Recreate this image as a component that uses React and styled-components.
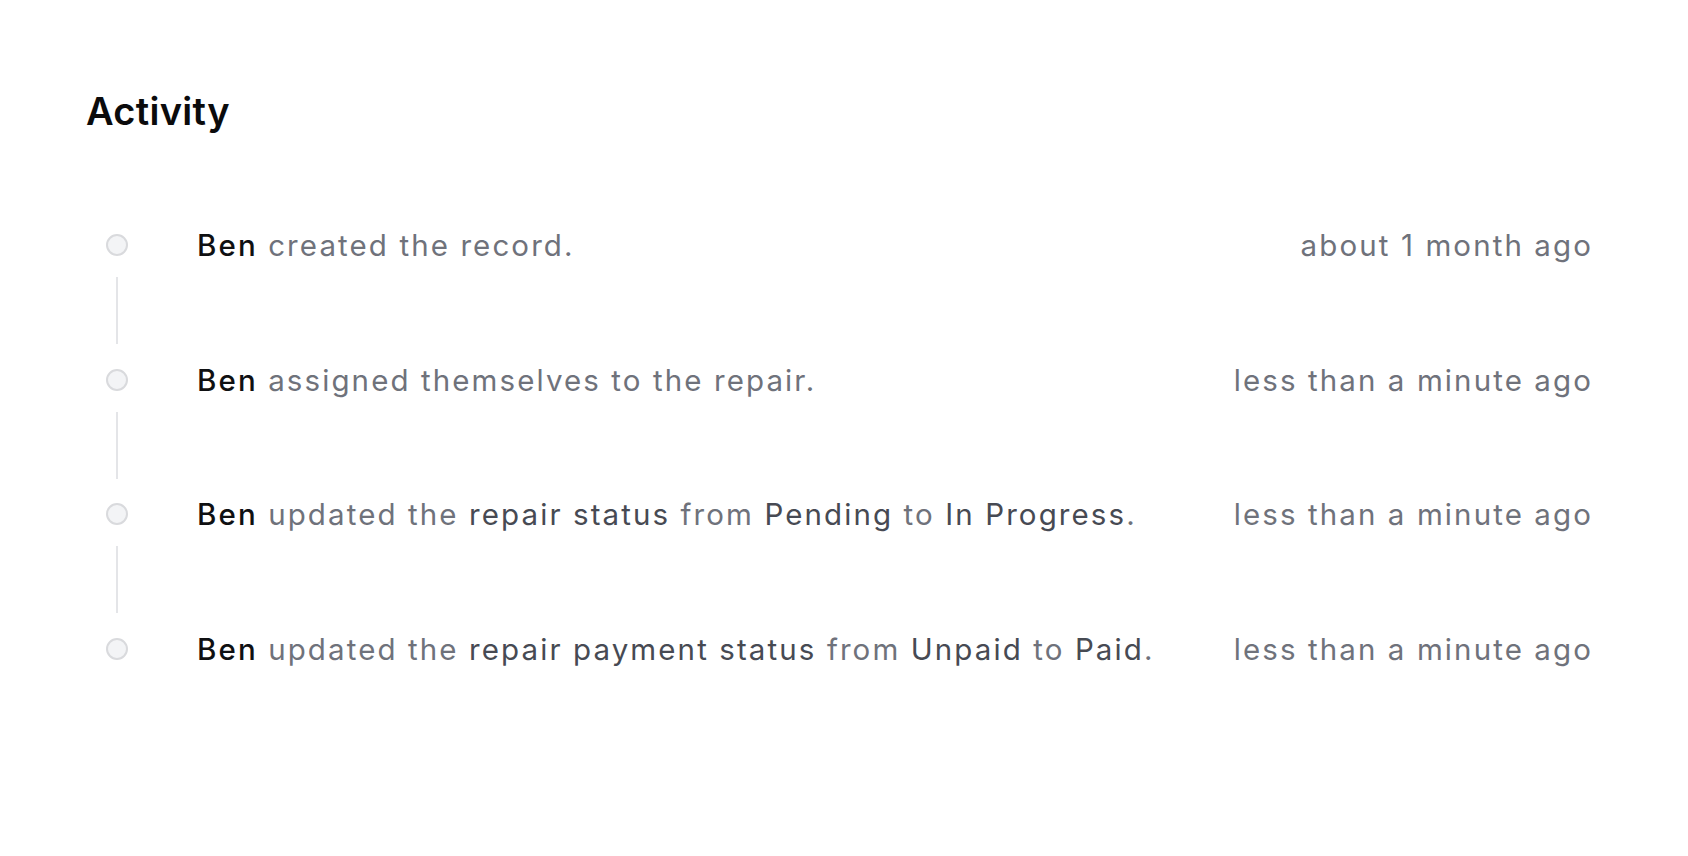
import React from 'react';
import styled, { createGlobalStyle } from 'styled-components';

const GlobalStyle = createGlobalStyle`
  html, body {
    margin: 0;
    padding: 0;
    background: #ffffff;
  }
  body {
    font-family: Inter, "Noto Sans", "Liberation Sans", sans-serif;
    -webkit-font-smoothing: antialiased;
  }
`;

const Page = styled.div`
  padding: 83px 97px 0 86px;
`;

const Title = styled.h2`
  margin: 0;
  font-size: 38px;
  line-height: 56px;
  font-weight: 600;
  color: #0b0b0c;
  letter-spacing: 0.3px;
`;

const Timeline = styled.ul`
  list-style: none;
  margin: 88px 0 0;
  padding: 0 0 0 20px;
`;

const Item = styled.li`
  display: flex;
  gap: 69px;
`;

const Marker = styled.div`
  display: flex;
  flex-direction: column;
  align-items: center;
  width: 22px;
  flex-shrink: 0;
`;

const DotBox = styled.div`
  height: 36px;
  display: flex;
  align-items: center;
`;

const Dot = styled.span`
  box-sizing: border-box;
  width: 22px;
  height: 22px;
  border-radius: 50%;
  background: #f3f4f6;
  border: 2px solid #d9dadd;
`;

const Line = styled.span`
  width: 2px;
  height: 67px;
  margin: 14px 0 17.5px;
  background: #e4e5e8;
`;

const Body = styled.div`
  flex: 1;
  display: flex;
  justify-content: space-between;
  gap: 40px;
  font-size: 29.5px;
  line-height: 36px;
  letter-spacing: 2.1px;
  color: #6f727b;
`;

const Text = styled.p`
  margin: 0;
`;

const Actor = styled.span`
  color: #0f1012;
  font-weight: 500;
`;

const Em = styled.span`
  color: #474a53;
`;

const Time = styled.time`
  white-space: nowrap;
  margin-right: -2px;
  color: #6f727b;
`;

const activity = [
  { id: 1, text: <>created the record.</>, time: 'about 1 month ago' },
  { id: 2, text: <>assigned themselves to the repair.</>, time: 'less than a minute ago' },
  {
    id: 3,
    text: (
      <>
        updated the <Em>repair status</Em> from <Em>Pending</Em> to <Em>In Progress</Em>.
      </>
    ),
    time: 'less than a minute ago',
  },
  {
    id: 4,
    text: (
      <>
        updated the <Em>repair payment status</Em> from <Em>Unpaid</Em> to <Em>Paid</Em>.
      </>
    ),
    time: 'less than a minute ago',
  },
];

export default function App() {
  return (
    <>
      <GlobalStyle />
      <Page>
        <Title>Activity</Title>
        <Timeline>
          {activity.map((a, i) => (
            <Item key={a.id}>
              <Marker>
                <DotBox>
                  <Dot />
                </DotBox>
                {i < activity.length - 1 && <Line />}
              </Marker>
              <Body>
                <Text>
                  <Actor>Ben</Actor> {a.text}
                </Text>
                <Time>{a.time}</Time>
              </Body>
            </Item>
          ))}
        </Timeline>
      </Page>
    </>
  );
}
